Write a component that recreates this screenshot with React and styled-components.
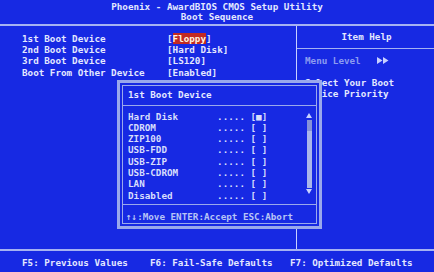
import React from 'react';
import styled, { createGlobalStyle } from 'styled-components';

const Global = createGlobalStyle`
html, body {
  margin: 0;
  padding: 0;
  background: #1729e3;
}
`;

const Screen = styled.div`
width: 434px;
height: 272px;
background: #1729e3;
color: #e4e8ff;
font-family: "DejaVu Sans Mono", "Liberation Mono", monospace;
font-size: 9.25px;
font-weight: bold;
display: flex;
flex-direction: column;
position: relative;
overflow: hidden;
white-space: pre;
`;

const Header = styled.header`
height: 26px;
border-bottom: 2px solid #a6b2f2;
display: flex;
flex-direction: column;
align-items: center;
padding-top: 1.5px;
box-sizing: border-box;
line-height: 10.6px;
`;

const Main = styled.main`
flex: 1;
display: flex;
`;

const LeftPanel = styled.section`
width: 297px;
border-right: 1px solid #c8d0ff;
padding: 6.8px 0 0 22px;
box-sizing: border-box;
`;

const SetupRow = styled.div`
display: grid;
grid-template-columns: 145px auto;
line-height: 11.3px;
`;

const Highlight = styled.span`
background: #c22a22;
color: #fff4e0;
`;

const RightPanel = styled.aside`
flex: 1;
display: flex;
flex-direction: column;
`;

const HelpTitle = styled.div`
height: 22px;
line-height: 22px;
text-align: center;
border-bottom: 1px solid #a6b2f2;
padding-left: 2px;
`;

const HelpBody = styled.div`
padding: 5.5px 0 0 8px;
`;

const HelpLine = styled.div`
height: 11.3px;
line-height: 11.3px;
display: flex;
align-items: center;
color: ${p => (p.$dim ? '#8c9cf0' : '#e4e8ff')};
`;

const Arrows = styled.svg`
margin-left: 16px;
`;

const Footer = styled.footer`
height: 23px;
border-top: 2px solid #a6b2f2;
box-sizing: border-box;
display: grid;
grid-template-columns: 128px 140px auto;
align-items: center;
padding: 1px 0 0 22px;
`;

const Popup = styled.div`
position: absolute;
left: 117px;
top: 80px;
width: 205px;
height: 149px;
box-sizing: border-box;
border: 3px solid #9aa8ec;
padding: 2px;
background: #1729e3;
`;

const PopupInner = styled.div`
height: 100%;
box-sizing: border-box;
border: 1px solid #9aa8ec;
display: flex;
flex-direction: column;
`;

const PopupTitle = styled.div`
height: 19px;
line-height: 17px;
padding-left: 5px;
border-bottom: 1px solid #9aa8ec;
`;

const PopupList = styled.div`
flex: 1;
display: flex;
padding: 4.5px 4px 0 5px;
`;

const Options = styled.div`
flex: 1;
line-height: 11.3px;
color: #d8defc;
`;

const Scroll = styled.div`
width: 6px;
display: flex;
flex-direction: column;
align-items: center;
padding-top: 2px;
`;

const Track = styled.div`
width: 5px;
height: 68px;
margin: 2px 0 1px;
background: #aab6ea;
display: flex;
flex-direction: column;
`;

const Thumb = styled.div`
height: 11px;
background: #8692d8;
`;

const PopupFooter = styled.div`
height: 19px;
box-sizing: border-box;
padding: 4px 0 0 3px;
line-height: 16px;
border-top: 1px solid #9aa8ec;
color: #b8c4f6;
`;

const Tri = ({ down }) => (
  <svg width="6" height="5" viewBox="0 0 6 5">
    <path d={down ? 'M0 0H6L3 5Z' : 'M3 0L6 5H0Z'} fill="#c8d2ff" />
  </svg>
);

const settings = [
  ['1st Boot Device', 'Floppy', true],
  ['2nd Boot Device', 'Hard Disk'],
  ['3rd Boot Device', 'LS120'],
  ['Boot From Other Device', 'Enabled'],
];

const devices = ['Hard Disk', 'CDROM', 'ZIP100', 'USB-FDD', 'USB-ZIP', 'USB-CDROM', 'LAN', 'Disabled'];

const App = () => {
  return (
    <Screen>
      <Global />
      <Header>
        <div>Phoenix - AwardBIOS CMOS Setup Utility</div>
        <div>Boot Sequence</div>
      </Header>
      <Main>
        <LeftPanel>
          {settings.map(([label, value, active]) => (
            <SetupRow key={label}>
              <span>{label}</span>
              <span>[{active ? <Highlight>{value}</Highlight> : value}]</span>
            </SetupRow>
          ))}
        </LeftPanel>
        <RightPanel>
          <HelpTitle>Item Help</HelpTitle>
          <HelpBody>
            <HelpLine $dim>
              Menu Level
              <Arrows width="12" height="7" viewBox="0 0 12 7">
                <path d="M0 0L5.5 3.5L0 7ZM6 0L11.5 3.5L6 7Z" fill="#c8d0ff" />
              </Arrows>
            </HelpLine>
            <HelpLine />
            <HelpLine>Select Your Boot</HelpLine>
            <HelpLine>Device Priority</HelpLine>
          </HelpBody>
        </RightPanel>
      </Main>
      <Footer>
        <span>F5: Previous Values</span>
        <span>F6: Fail-Safe Defaults</span>
        <span>F7: Optimized Defaults</span>
      </Footer>

      <Popup>
        <PopupInner>
          <PopupTitle>1st Boot Device</PopupTitle>
          <PopupList>
            <Options>
              {devices.map((d, i) => (
                <div key={d}>{d.padEnd(16, ' ')}..... [{i === 0 ? '■' : ' '}]</div>
              ))}
            </Options>
            <Scroll>
              <Tri />
              <Track>
                <Thumb />
              </Track>
              <Tri down />
            </Scroll>
          </PopupList>
          <PopupFooter>↑↓:Move ENTER:Accept ESC:Abort</PopupFooter>
        </PopupInner>
      </Popup>
    </Screen>
  );
};

export default App;
